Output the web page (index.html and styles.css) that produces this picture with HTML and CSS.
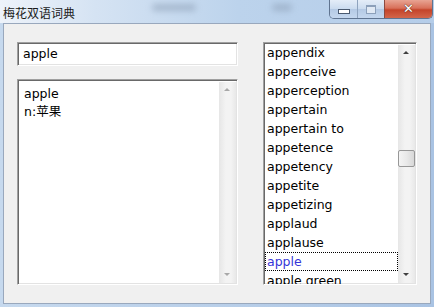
FILE: index.html
```html
<!DOCTYPE html>
<html lang="zh-CN">

<head>
  <meta charset="UTF-8">
  <title>梅花双语词典</title>
  <link rel="stylesheet" href="styles.css">
</head>

<body>

  <div class="window">
    <div class="titlebar">
      <span class="title">梅花双语词典</span>
      <span class="blur blur1"></span>
      <span class="blur blur2"></span>
      <div class="caption-btns">
        <div class="cbtn min"><span class="glyph-min"></span></div>
        <div class="cbtn max"><span class="glyph-max"></span></div>
        <div class="cbtn close"><span class="glyph-close">✕</span></div>
      </div>
    </div>

    <div class="client">
      <div class="leftcol">
        <div class="edit sunken">apple</div>
        <div class="memo sunken">
          <div class="memo-text">
            <div>apple</div>
            <div>n:苹果</div>
          </div>
          <div class="vscroll">
            <div class="arrow up dim"></div>
            <div class="track"></div>
            <div class="arrow down dim"></div>
          </div>
        </div>
      </div>

      <div class="listbox sunken">
        <ul class="items">
          <li>appendix</li>
          <li>apperceive</li>
          <li>apperception</li>
          <li>appertain</li>
          <li>appertain to</li>
          <li>appetence</li>
          <li>appetency</li>
          <li>appetite</li>
          <li>appetizing</li>
          <li>applaud</li>
          <li>applause</li>
          <li class="selected">apple</li>
          <li>apple green</li>
        </ul>
        <div class="vscroll">
          <div class="arrow up"></div>
          <div class="track">
            <div class="thumb"></div>
          </div>
          <div class="arrow down"></div>
        </div>
      </div>
    </div>
  </div>

</body>

</html>
```

FILE: styles.css
```css
body {
  margin: 0;
  width: 434px;
  height: 307px;
  overflow: hidden;
  font-family: "DejaVu Sans", "Noto Sans CJK SC", sans-serif;
}

.window {
  width: 434px;
  height: 307px;
  display: flex;
  flex-direction: column;
  background: linear-gradient(90deg, #c6d9ee 0%, #b6cde8 60%, #a9c3e3 100%);
}

/* 标题栏 */
.titlebar {
  height: 23px;
  flex-shrink: 0;
  position: relative;
  background: linear-gradient(90deg, #eef3fa 0%, #d5e3f3 22%, #bcd3ec 55%, #b5cde9 100%);
}

.title {
  position: absolute;
  left: 3px;
  top: 4px;
  font-family: "Noto Sans CJK SC", sans-serif;
  font-size: 12px;
  line-height: 17px;
  color: #1a1a1a;
}

.blur {
  position: absolute;
  background: #8a9cb3;
  border-radius: 6px;
  filter: blur(3px);
  opacity: 0.55;
}

.blur1 {
  left: 152px;
  top: 4px;
  width: 44px;
  height: 7px;
}

.blur2 {
  left: 272px;
  top: 4px;
  width: 20px;
  height: 7px;
}

.caption-btns {
  position: absolute;
  right: 1px;
  top: 0;
  display: flex;
  border: 1px solid #5f7490;
  border-top: none;
  border-radius: 0 0 5px 5px;
  overflow: hidden;
  height: 18px;
}

.cbtn {
  display: flex;
  align-items: center;
  justify-content: center;
  height: 18px;
}

.min {
  width: 27px;
  background: linear-gradient(#e4edf8 0%, #cadbef 50%, #b4c9e4 51%, #c4d7ee 100%);
  border-right: 1px solid #8ea3be;
}

.max {
  width: 26px;
  background: linear-gradient(#e4edf8 0%, #cadbef 50%, #b4c9e4 51%, #c4d7ee 100%);
  border-right: 1px solid #8b4a40;
}

.close {
  width: 47px;
  background: linear-gradient(#e8a493 0%, #d8705a 45%, #c4442a 55%, #d3664a 100%);
}

.glyph-min {
  width: 10px;
  height: 3px;
  background: #fff;
  border: 1px solid #4a5a70;
  margin-top: 5px;
}

.glyph-max {
  width: 8px;
  height: 6px;
  border: 1px solid #8ca0ba;
  border-top-width: 2px;
  background: #e0e9f4;
}

.glyph-close {
  color: #fff;
  font-size: 13px;
  font-weight: bold;
  line-height: 18px;
  text-shadow: 0 0 1px #4a2a20, 0 0 1px #4a2a20;
}

/* 客户区 */
.client {
  flex: 1;
  min-height: 0;
  margin: 0 3px 3px 3px;
  border: 1px solid #99a8bd;
  background-color: #f0f0f0;
  padding: 18px 13px 18px 13px;
  display: flex;
  gap: 25px;
}

.leftcol {
  width: 221px;
  display: flex;
  flex-direction: column;
}

.sunken {
  box-sizing: border-box;
  background-color: #fff;
  border-top: 1px solid #a0a0a0;
  border-left: 1px solid #a0a0a0;
  border-right: 1px solid #ffffff;
  border-bottom: 1px solid #ffffff;
  box-shadow: inset 1px 1px 0 #696969, inset -1px -1px 0 #e3e3e3;
}

.edit {
  height: 24px;
  flex-shrink: 0;
  padding: 0 0 0 5px;
  font-size: 12.5px;
  line-height: 22px;
  color: #000;
  margin-bottom: 13px;
}

.memo {
  flex: 1;
  min-height: 0;
  display: flex;
}

.memo-text {
  flex: 1;
  padding: 5px 0 0 6px;
  font-size: 12.5px;
  line-height: 18px;
  color: #000;
}

/* 滚动条 */
.vscroll {
  width: 17px;
  margin: 2px 1px 1px 0;
  display: flex;
  flex-direction: column;
  background: linear-gradient(90deg, #e6e6e6 0%, #f3f3f3 40%, #f3f3f3 70%, #e8e8e8 100%);
}

.arrow {
  height: 17px;
  position: relative;
}

.arrow::after {
  content: "";
  position: absolute;
  left: 5px;
  border-left: 3px solid transparent;
  border-right: 3px solid transparent;
}

.arrow.up::after {
  top: 6px;
  border-bottom: 3px solid #404040;
}

.arrow.down::after {
  top: 7px;
  border-top: 3px solid #404040;
}

.arrow.dim.up::after {
  border-bottom-color: #a8a8a8;
}

.arrow.dim.down::after {
  border-top-color: #a8a8a8;
}

.track {
  flex: 1;
  position: relative;
}

.thumb {
  position: absolute;
  left: 0;
  top: 88px;
  width: 15px;
  height: 15px;
  border: 1px solid #979797;
  border-radius: 2px;
  background: linear-gradient(90deg, #f4f4f4 0%, #e9e9e9 50%, #d8d8d8 100%);
}

/* 单词列表 */
.listbox {
  width: 154px;
  min-height: 0;
  display: flex;
  overflow: hidden;
}

.items {
  flex: 1;
  list-style: none;
  margin: 0;
  padding: 0 0 0 1px;
  overflow: hidden;
}

.items li {
  height: 19px;
  line-height: 19px;
  padding-left: 2px;
  font-size: 12.5px;
  color: #000;
  white-space: nowrap;
  box-sizing: border-box;
}

.items li.selected {
  color: #3535d8;
  outline: 1px dotted #000;
  outline-offset: -1px;
}
```
